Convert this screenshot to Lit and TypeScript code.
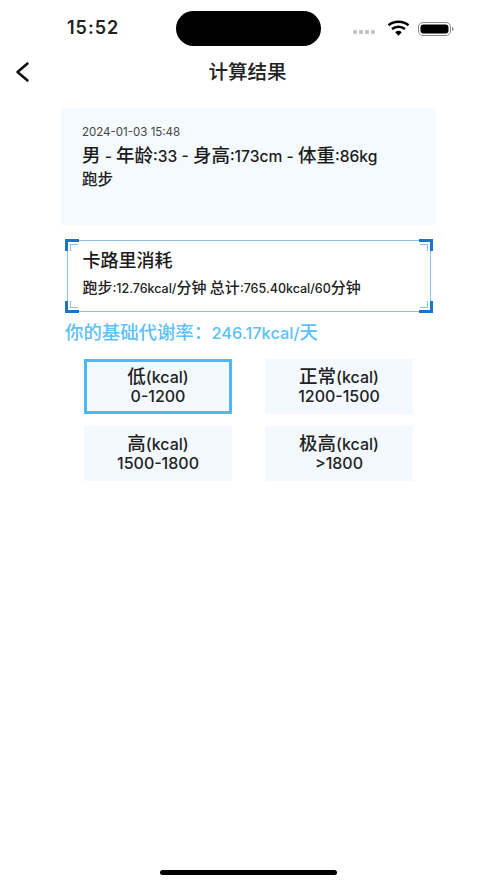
import { LitElement, html, css } from "lit";
import { customElement } from "lit/decorators.js";

const levels = [
  { name: "低(kcal)", range: "0-1200", active: true },
  { name: "正常(kcal)", range: "1200-1500", active: false },
  { name: "高(kcal)", range: "1500-1800", active: false },
  { name: "极高(kcal)", range: ">1800", active: false },
];

/* The reference sets CJK glyphs noticeably larger than the Latin ones. */
const mixed = (text: string) =>
  text
    .split(/([\u4e00-\u9fff\uff00-\uffef]+)/)
    .map((part, i) => (i % 2 ? html`<span class="cjk">${part}</span>` : part));

@customElement("app-root")
export class AppRoot extends LitElement {
  static styles = css`
    :host {
      display: flex;
      flex-direction: column;
      height: 883px;
      width: 497px;
      overflow: hidden;
      background: #fff;
      color: #1b1b1b;
      font-family: "Inter", "Noto Sans CJK SC", sans-serif;
      position: relative;
    }
    .status {
      height: 56px;
      flex: none;
      display: flex;
      align-items: flex-start;
      position: relative;
    }
    .time {
      margin: 17px 0 0 67px;
      font-size: 18px;
      line-height: 22px;
      font-weight: 600;
      letter-spacing: 1px;
      color: #222;
    }
    .island {
      position: absolute;
      left: 176px;
      top: 11px;
      width: 145px;
      height: 35px;
      border-radius: 17.5px;
      background: #000;
    }
    .status-icons {
      position: absolute;
      left: 352px;
      top: 19px;
      display: block;
    }
    .nav {
      height: 32px;
      flex: none;
      display: flex;
      align-items: center;
      justify-content: center;
      position: relative;
    }
    .back {
      position: absolute;
      left: 14px;
      top: 5px;
    }
    .title {
      margin-left: -2px;
      font-size: 19.5px;
      font-weight: 500;
      line-height: 32px;
      color: #222;
    }
    .content {
      display: flex;
      flex-direction: column;
      padding: 20px 0 0 61px;
      width: 375px;
    }
    .info {
      width: 375px;
      height: 117px;
      box-sizing: border-box;
      background: #f5faff;
      padding: 17px 21px 0;
    }
    .date {
      font-size: 11.5px;
      line-height: 15px;
      color: #444;
    }
    .person {
      margin-top: 3px;
      font-size: 15.6px;
      line-height: 24px;
      font-weight: 500;
      color: #1b1b1b;
      white-space: nowrap;
    }
    .person .cjk {
      font-size: 18.5px;
    }
    .sport {
      font-size: 15.5px;
      line-height: 22px;
      font-weight: 500;
      color: #222;
    }
    .frame {
      position: relative;
      margin: 15px 0 0 6px;
      width: 364px;
      height: 72px;
      box-sizing: border-box;
      border: 1.5px solid #8cc0e6;
      padding: 7.5px 0 0 14.5px;
    }
    .corner {
      position: absolute;
      width: 11px;
      height: 9px;
      border: 0 solid #1b74c4;
    }
    .corner::after {
      content: "";
      position: absolute;
      width: 7px;
      height: 6px;
      border: 0 solid #8cc0e6;
    }
    .tl { left: -3.5px; top: -2.5px; border-width: 3px 0 0 3px; }
    .tl::after { left: 2px; top: 2px; border-width: 1.5px 0 0 1.5px; }
    .tr { right: -3px; top: -2.5px; border-width: 3px 3px 0 0; }
    .tr::after { right: 2px; top: 2px; border-width: 1.5px 1.5px 0 0; }
    .bl { left: -3.5px; bottom: -2px; border-width: 0 0 3px 3px; }
    .bl::after { left: 2px; bottom: 2px; border-width: 0 0 1.5px 1.5px; }
    .br { right: -3px; bottom: -2px; border-width: 0 3px 3px 0; }
    .br::after { right: 2px; bottom: 2px; border-width: 0 1.5px 1.5px 0; }
    .frame-title {
      font-size: 18px;
      line-height: 24px;
      font-weight: 500;
      color: #1b1b1b;
    }
    .frame-line {
      margin-top: 5px;
      font-size: 12.5px;
      line-height: 20px;
      font-weight: 500;
      color: #222;
      white-space: nowrap;
    }
    .frame-line .cjk {
      font-size: 15px;
    }
    .bmr {
      margin: 8px 0 0 4px;
      font-size: 16.4px;
      line-height: 24px;
      font-weight: 500;
      color: #5cc1f7;
      white-space: pre;
      word-spacing: -5px;
    }
    .bmr .cjk {
      font-size: 18.4px;
    }
    .grid {
      margin: 14px 0 0 23px;
      display: grid;
      grid-template-columns: 148px 148px;
      grid-auto-rows: 55px;
      column-gap: 33px;
      row-gap: 12px;
    }
    .level {
      box-sizing: border-box;
      background: #f3f9ff;
      display: flex;
      flex-direction: column;
      align-items: center;
      justify-content: center;
      font-size: 16px;
      line-height: 19px;
      font-weight: 500;
      color: #222;
    }
    .level .cjk {
      font-size: 18.5px;
    }
    .level.active {
      border: 3px solid #4db8f5;
    }
    .home {
      position: absolute;
      left: 160px;
      top: 870px;
      width: 177px;
      height: 5px;
      border-radius: 3px;
      background: #000;
    }
  `;

  render() {
    return html`
      <div class="status">
        <span class="time">15:52</span>
        <div class="island"></div>
        <svg class="status-icons" width="104" height="18" viewBox="0 0 104 18">
          <g fill="#c4c4c4">
            <circle cx="3" cy="13" r="2.2"></circle>
            <circle cx="9" cy="13" r="2.2"></circle>
            <circle cx="15" cy="13" r="2.2"></circle>
            <circle cx="21" cy="13" r="2.2"></circle>
          </g>
          <g fill="none" stroke="#000" stroke-width="2.4">
            <path d="M36.5 6.2a16 16 0 0 1 20 0"></path>
            <path d="M40 10a10.5 10.5 0 0 1 13 0"></path>
          </g>
          <path d="M43.2 13.2a5 5 0 0 1 6.6 0l-3.3 3.6z" fill="#000"></path>
          <rect x="66.5" y="3.5" width="32" height="13" rx="4.5" fill="none" stroke="#8a8a8a" stroke-width="1"></rect>
          <rect x="68.5" y="5.5" width="28" height="9" rx="3" fill="#000"></rect>
          <path d="M100 8v4c1-.3 1.600-1 1.600-2s-.6-1.700-1.600-2z" fill="#8a8a8a"></path>
        </svg>
      </div>
      <div class="nav">
        <svg class="back" width="18" height="22" viewBox="0 0 18 22">
          <path d="M13.500 2.500L3.500 11l10 8.500" fill="none" stroke="#111" stroke-width="2.600" stroke-linecap="round" stroke-linejoin="round"></path>
        </svg>
        <span class="title">计算结果</span>
      </div>
      <div class="content">
        <div class="info">
          <div class="date">2024-01-03 15:48</div>
          <div class="person">${mixed("男 - 年龄:33 - 身高:173cm - 体重:86kg")}</div>
          <div class="sport">跑步</div>
        </div>
        <div class="frame">
          <span class="corner tl"></span><span class="corner tr"></span>
          <span class="corner bl"></span><span class="corner br"></span>
          <div class="frame-title">卡路里消耗</div>
          <div class="frame-line">${mixed("跑步:12.76kcal/分钟 总计:765.40kcal/60分钟")}</div>
        </div>
        <div class="bmr">${mixed("你的基础代谢率： 246.17kcal/天")}</div>
        <div class="grid">
          ${levels.map(
            (l) => html`<div class="level ${l.active ? "active" : ""}">
              <span>${mixed(l.name)}</span><span>${l.range}</span>
            </div>`
          )}
        </div>
      </div>
      <div class="home"></div>
    `;
  }
}
